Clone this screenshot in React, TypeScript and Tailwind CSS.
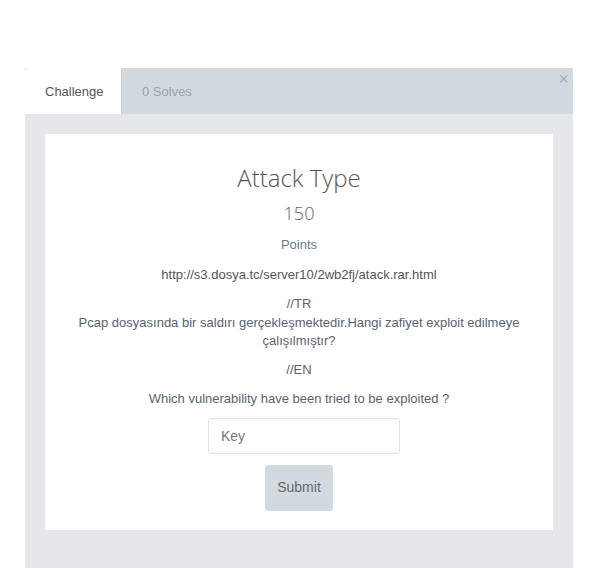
export default function App() {
  return (
    <div className="h-[568px] w-[598px] overflow-hidden bg-white pt-[68px] pl-[25px] font-['Liberation_Sans',Arial,sans-serif]">
      <div className="w-[548px]">
        <div className="flex h-[46px] items-stretch bg-[#d2dae0]">
          <div className="flex w-[97px] items-center rounded-tl-[3px] border-r border-[#c8d0d6] bg-white pt-[2px] pl-[20px] text-[13px] text-[#555]">
            Challenge
          </div>
          <div className="flex items-center pt-[2px] pl-[20px] text-[13px] text-[#9aa3ab]">0 Solves</div>
          <div className="ml-auto pr-[4px] pt-[1px] text-[18px] leading-[20px] text-[#a9b0b6]">×</div>
        </div>
        <div className="bg-[#e4e8eb] px-[20px] pt-[20px] pb-[40px]">
          <div className="flex h-[396px] flex-col items-center bg-white pt-[30px] text-center text-[13px] leading-[18.5px] text-[#5a6270]">
            <h3 className="font-['Open_Sans',sans-serif] text-[24px] font-light leading-[28px] text-[#555]">Attack Type</h3>
            <div className="mt-[10px] font-['Open_Sans',sans-serif] text-[18px] font-light leading-[22px] text-[#666]">150</div>
            <div className="mt-[12px] text-[#6b7a8c]">Points</div>
            <p className="mt-[11px] text-[#555]">http://s3.dosya.tc/server10/2wb2fj/atack.rar.html</p>
            <p className="mt-[11px] px-[30px]">
              //TR
              <br />
              Pcap dosyasında bir saldırı gerçekleşmektedir.Hangi zafiyet exploit edilmeye çalışılmıştır?
            </p>
            <p className="mt-[10px]">//EN</p>
            <p className="mt-[11px]">Which vulnerability have been tried to be exploited ?</p>
            <input
              placeholder="Key"
              className="mt-[9px] ml-[10px] h-[36px] w-[192px] rounded-[3px] border border-[#e3e3e3] px-[12px] text-[14px] text-[#555] placeholder:text-[#777] outline-none"
            />
            <button className="mt-[11px] h-[46px] w-[68px] rounded-[3px] bg-[#d2dae0] text-[14px] text-[#666]">Submit</button>
          </div>
        </div>
      </div>
    </div>
  )
}
